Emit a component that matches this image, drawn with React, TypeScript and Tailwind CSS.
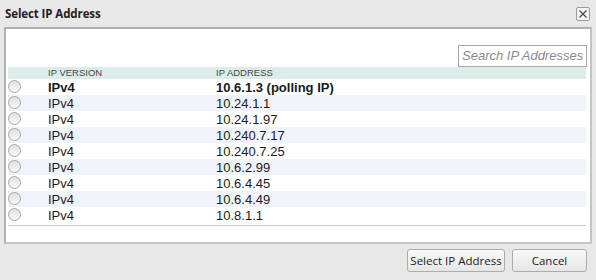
import React from "react";

const rows = [
  { v: "IPv4", ip: "10.6.1.3 (polling IP)", bold: true },
  { v: "IPv4", ip: "10.24.1.1" },
  { v: "IPv4", ip: "10.24.1.97" },
  { v: "IPv4", ip: "10.240.7.17" },
  { v: "IPv4", ip: "10.240.7.25" },
  { v: "IPv4", ip: "10.6.2.99" },
  { v: "IPv4", ip: "10.6.4.45" },
  { v: "IPv4", ip: "10.6.4.49" },
  { v: "IPv4", ip: "10.8.1.1" },
];

function Radio() {
  return (
    <div className="w-[13px] h-[13px] rounded-full border border-[#a8a8a8] bg-gradient-to-b from-[#e0e0e0] to-[#f7f7f7] shrink-0" />
  );
}

export default function App() {
  return (
    <div
      className="w-[596px] h-[280px] bg-[#e8e8e8] flex flex-col"
      style={{ fontFamily: '"Liberation Sans", Arial, sans-serif' }}
    >
      <div className="h-[27px] shrink-0 flex items-center justify-between pl-[5px] pr-[6px]">
        <span
          className="text-[11.5px] font-bold text-[#222]"
          style={{ fontFamily: '"Open Sans", sans-serif', letterSpacing: "-0.1px" }}
        >
          Select IP Address
        </span>
        <div className="w-[14px] h-[14px] border border-[#9a9a9a] bg-[#f4f4f4] rounded-[2px] flex items-center justify-center mt-[1px]">
          <svg width="10" height="10" viewBox="0 0 10 10">
            <path d="M1.5 1.5 L8.5 8.5 M8.5 1.5 L1.5 8.5" stroke="#444" strokeWidth="1.2" />
          </svg>
        </div>
      </div>
      <div className="mx-[4px] h-[217px] shrink-0 border-2 border-[#c4c4c4] border-t-[#b0b0b0] border-l-[#b0b0b0] bg-white flex flex-col px-[2px]">
        <div className="flex justify-end pt-[16px] pr-[1px]">
          <div className="w-[129px] h-[22px] border border-[#a8a8a8] flex items-center px-[3px]">
            <span className="text-[13px] italic text-[#8a8a8a] whitespace-nowrap">Search IP Addresses</span>
          </div>
        </div>
        <div className="mr-[2px] border-b border-[#c8c8c8]">
          <div className="h-[12px] bg-[#dcede9] flex items-center text-[9.5px] text-[#444]">
            <span className="pl-[40px] w-[208px]">IP VERSION</span>
            <span>IP ADDRESS</span>
          </div>
          {rows.map((r, i) => (
            <div
              key={i}
              className={`h-[16px] flex items-center text-[13px] text-[#1a1a1a] ${i % 2 === 1 ? "bg-[#eef4fa]" : "bg-white"} ${r.bold ? "font-bold" : ""}`}
            >
              <div className="w-[40px] flex -mt-[2px]">
                <Radio />
              </div>
              <span className="w-[168px] pt-[1px]">{r.v}</span>
              <span className="pt-[1px]">{r.ip}</span>
            </div>
          ))}
          <div className="h-[2px]" />
        </div>
      </div>
      <div
        className="flex justify-end gap-[7px] pr-[9px] pt-[5px]"
        style={{ fontFamily: '"Open Sans", sans-serif' }}
      >
        <button className="w-[98px] h-[23px] border border-[#acacac] rounded-[3px] bg-gradient-to-b from-[#f8f8f8] to-[#e6e6e6] text-[11.5px] text-[#222] whitespace-nowrap">
          Select IP Address
        </button>
        <button className="w-[75px] h-[23px] border border-[#acacac] rounded-[3px] bg-gradient-to-b from-[#f8f8f8] to-[#e6e6e6] text-[11.5px] text-[#222] whitespace-nowrap">
          Cancel
        </button>
      </div>
    </div>
  );
}
